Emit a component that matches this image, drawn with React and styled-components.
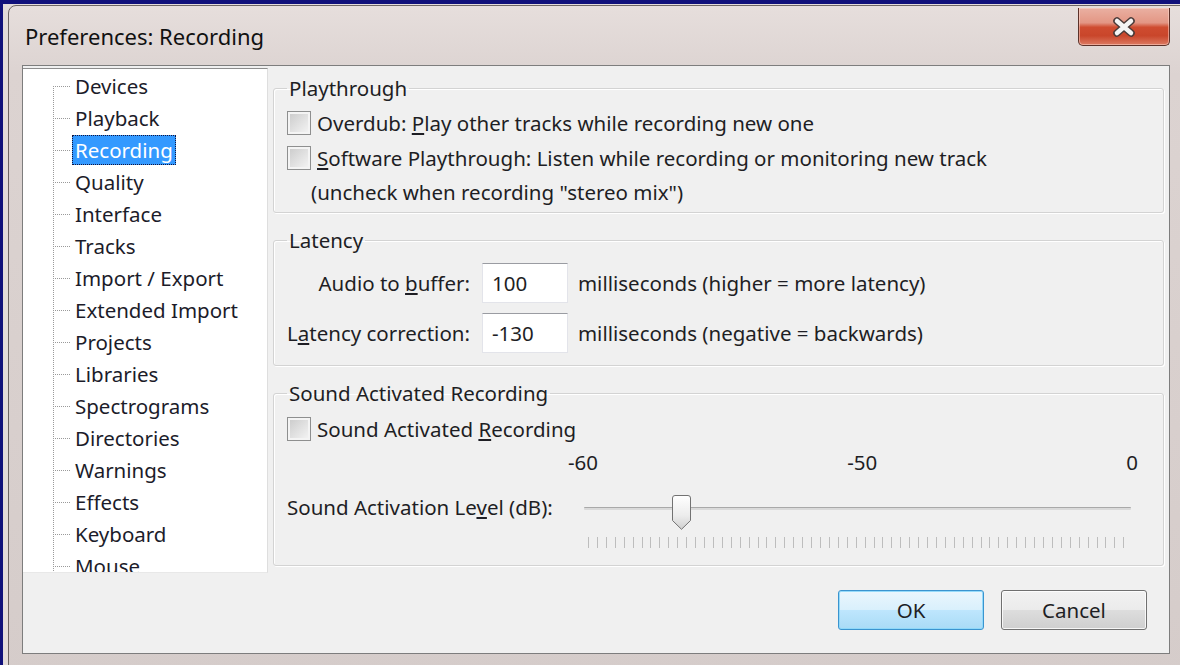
import React from 'react'
import styled, { createGlobalStyle } from 'styled-components'

const GlobalStyle = createGlobalStyle`
  html, body {
    margin: 0;
    padding: 0;
    background: #e3dbd9;
  }
  body {
    font-family: "Noto Sans", "Open Sans", sans-serif;
    color: #1e1e24;
  }
`

const Screen = styled.div`
  width: 1180px;
  height: 665px;
  box-sizing: border-box;
  overflow: hidden;
  border-top: 4px solid #10107a;
  border-left: 3px solid #10107a;
  background: #e3dbd9;
  padding: 1px 0 0 5px;
`

const Window = styled.div`
  width: 1200px;
  height: 690px;
  box-sizing: border-box;
  border: 1px solid #6d6564;
  border-radius: 8px 8px 0 0;
  background: linear-gradient(180deg, #e6dedc 0%, #dcd3d1 10%, #d5ccca 100%);
  padding-left: 13px;
  display: flex;
  flex-direction: column;
`

const TitleBar = styled.div`
  width: 1148px;
  height: 59px;
  display: flex;
  justify-content: space-between;
  align-items: flex-start;
`

const Title = styled.div`
  margin-top: 15px;
  padding-left: 3px;
  font-size: 22px;
  line-height: 30px;
  color: #111;
`

const CloseButton = styled.div`
  margin-top: 2px;
  width: 92px;
  height: 38px;
  box-sizing: border-box;
  border: 1px solid #5c3129;
  border-top: none;
  border-radius: 0 0 5px 5px;
  background: linear-gradient(180deg, #eab0a2 0%, #e39684 40%, #cf4c30 52%, #c9462b 75%, #dc7a62 100%);
  box-shadow: inset 0 0 0 1px rgba(255, 220, 210, 0.5);
  display: flex;
  align-items: center;
  justify-content: center;
`

const Client = styled.div`
  width: 1148px;
  height: 589px;
  box-sizing: border-box;
  border: 1px solid #7d7d7d;
  background: #f0f0f0;
  display: flex;
  flex-direction: column;
`

const MainRow = styled.div`
  display: flex;
  margin-top: 2px;
  height: 507px;
`

const Tree = styled.ul`
  list-style: none;
  margin: 0;
  padding: 1px 0 0;
  width: 245px;
  height: 505px;
  box-sizing: border-box;
  overflow: hidden;
  background: #fff;
  border-top: 1px solid #8d8d8d;
  border-right: 1px solid #dedede;
  border-bottom: 1px solid #e8e8e8;
`

const TreeRow = styled.li`
  display: flex;
  align-items: center;
  height: 32px;
  padding-left: 30px;
  font-size: 20.5px;
`

const Connector = styled.span`
  align-self: stretch;
  width: 18px;
  flex-shrink: 0;
  background-image:
    repeating-linear-gradient(to bottom, #9a9a9a 0 1px, transparent 1px 2px),
    repeating-linear-gradient(to right, #9a9a9a 0 1px, transparent 1px 2px);
  background-size: 1px ${p => (p.$first ? '50%' : '100%')}, 100% 1px;
  background-position: left bottom, left center;
  background-repeat: no-repeat;
`

const TreeLabel = styled.span`
  margin-left: 1px;
  padding: 0 3px;
  height: 30px;
  line-height: 30px;
  white-space: nowrap;
  color: ${p => (p.$selected ? '#fff' : '#1c1c2a')};
  background: ${p => (p.$selected ? '#3399ff' : 'transparent')};
  outline: ${p => (p.$selected ? '1px dotted #14143c' : 'none')};
  outline-offset: -1px;
`

const Panel = styled.div`
  flex: 1;
  margin: 0 5px 0 5px;
  padding-top: 8px;
  display: flex;
  flex-direction: column;
  gap: 15px;
`

const Group = styled.fieldset`
  margin: 0;
  padding: 0 13px;
  min-inline-size: 0;
  border: 1px solid #d3d3d3;
  border-radius: 3px;
  box-shadow: inset 1px 1px 0 #fff, 1px 1px 0 #fff;
  font-size: 20.5px;
`

const Legend = styled.legend`
  padding: 0 2px;
  line-height: 24px;
  color: #1e1e24;
`

const CheckList = styled.div`
  padding: 5px 0 2px;
`

const CheckRow = styled.div`
  display: flex;
  align-items: center;
  gap: 6px;
  height: 35px;
  white-space: nowrap;
`

const Note = styled.div`
  height: 35px;
  line-height: 35px;
  padding-left: 24px;
  white-space: nowrap;
`

const Box = styled.span`
  width: 24px;
  height: 24px;
  box-sizing: border-box;
  flex-shrink: 0;
  border: 1px solid #8e8f8f;
  background: linear-gradient(135deg, #c9c9c9 0%, #e2e2e2 55%, #f6f6f6 100%);
  box-shadow: inset 0 0 0 2px #f4f4f4;
`

const LatencyGrid = styled.div`
  display: grid;
  grid-template-columns: auto 86px auto;
  justify-content: start;
  column-gap: 12px;
  row-gap: 10px;
  align-items: center;
  padding: 11px 0 12px;
  white-space: nowrap;
`

const FieldLabel = styled.label`
  justify-self: end;
`

const Hint = styled.span`
  margin-left: -2px;
`

const NumberField = styled.input`
  width: 86px;
  height: 40px;
  box-sizing: border-box;
  margin: 0;
  padding: 0 9px;
  border: 1px solid #e3e4ea;
  border-top-color: #9a9ca2;
  background: #fff;
  font: inherit;
  color: #1e1e24;
  outline: none;
`

const SoundGrid = styled.div`
  display: grid;
  grid-template-columns: 279px 574px;
  padding: 6px 0 17px;
  white-space: nowrap;
`

const WideRow = styled.div`
  grid-column: 1 / -1;
`

const Scale = styled.div`
  grid-column: 2;
  margin-top: 4px;
  height: 24px;
  line-height: 24px;
  padding: 0 2px;
  display: flex;
  justify-content: space-between;
`

const LevelLabel = styled.label`
  margin-top: 21px;
  line-height: 24px;
`

const Slider = styled.div`
  margin-top: 21px;
  display: flex;
  flex-direction: column;
`

const Track = styled.div`
  position: relative;
  height: 35px;
  margin: 0 9px 0 18px;
`

const Channel = styled.div`
  margin-top: 12px;
  height: 3px;
  box-sizing: border-box;
  border-top: 1px solid #a9a9a9;
  background: #dadada;
  border-radius: 1px;
`

const Thumb = styled.svg`
  position: absolute;
  top: 0;
`

const Ticks = styled.div`
  margin: 7px 15px 0 22px;
  height: 11px;
  display: flex;
  justify-content: space-between;
`

const Tick = styled.span`
  width: 1px;
  height: 100%;
  background: #bdbdbd;
`

const Footer = styled.div`
  display: flex;
  justify-content: flex-end;
  gap: 17px;
  padding: 15px 22px 23px 0;
`

const Button = styled.button`
  width: 146px;
  height: 40px;
  margin: 0;
  padding: 0;
  font: inherit;
  font-size: 20.5px;
  color: #1e1e24;
  border-radius: 3px;
  border: 1px solid ${p => (p.$primary ? '#3a94cf' : '#707070')};
  background: ${p =>
    p.$primary
      ? 'linear-gradient(180deg, #eaf6fd 0%, #d9f0fc 50%, #bee6fd 51%, #a9dbf6 100%)'
      : 'linear-gradient(180deg, #f2f2f2 0%, #ebebeb 50%, #dddddd 51%, #cfcfcf 100%)'};
  box-shadow: inset 0 0 0 1px ${p => (p.$primary ? 'rgba(140, 215, 250, 0.9)' : 'rgba(255, 255, 255, 0.8)')};
`

const sections = [
  'Devices', 'Playback', 'Recording', 'Quality', 'Interface', 'Tracks',
  'Import / Export', 'Extended Import', 'Projects', 'Libraries',
  'Spectrograms', 'Directories', 'Warnings', 'Effects', 'Keyboard', 'Mouse',
]

const CloseGlyph = () => (
  <svg width="26" height="20" viewBox="0 0 26 20">
    <path d="M6 4 L20 16 M20 4 L6 16" stroke="#4a3a38" strokeWidth="7.5" strokeLinecap="round" />
    <path d="M6 4 L20 16 M20 4 L6 16" stroke="#f4f4f4" strokeWidth="4.5" strokeLinecap="round" />
  </svg>
)

const SliderThumb = ({ left }) => (
  <Thumb width="19" height="35" viewBox="0 0 19 35" style={{ left }}>
    <defs>
      <linearGradient id="thumbFill" x1="0" y1="0" x2="0" y2="1">
        <stop offset="0" stopColor="#ffffff" />
        <stop offset="0.6" stopColor="#ececec" />
        <stop offset="1" stopColor="#cfcfcf" />
      </linearGradient>
    </defs>
    <path
      d="M3 0.5 H16 Q18.5 0.5 18.5 3 V25.5 L9.5 34.3 L0.5 25.5 V3 Q0.5 0.5 3 0.5 Z"
      fill="url(#thumbFill)"
      stroke="#727272"
    />
  </Thumb>
)

const LevelSlider = ({ min, max, value }) => {
  const trackWidth = 547
  const thumbWidth = 19
  const left = ((value - min) / (max - min)) * (trackWidth - thumbWidth)
  const ticks = Array.from({ length: max - min + 1 }, (_, i) => i)

  return (
    <Slider>
      <Track>
        <Channel />
        <SliderThumb left={left} />
      </Track>
      <Ticks>
        {ticks.map(i => <Tick key={i} />)}
      </Ticks>
    </Slider>
  )
}

export default function App() {
  return (
    <>
      <GlobalStyle />
      <Screen>
        <Window>
          <TitleBar>
            <Title>Preferences: Recording</Title>
            <CloseButton>
              <CloseGlyph />
            </CloseButton>
          </TitleBar>

          <Client>
            <MainRow>
              <Tree>
                {sections.map((name, i) => (
                  <TreeRow key={name}>
                    <Connector $first={i === 0} />
                    <TreeLabel $selected={name === 'Recording'}>{name}</TreeLabel>
                  </TreeRow>
                ))}
              </Tree>

              <Panel>
                <Group>
                  <Legend>Playthrough</Legend>
                  <CheckList>
                    <CheckRow>
                      <Box />
                      <span>Overdub: <u>P</u>lay other tracks while recording new one</span>
                    </CheckRow>
                    <CheckRow>
                      <Box />
                      <span><u>S</u>oftware Playthrough: Listen while recording or monitoring new track</span>
                    </CheckRow>
                    <Note>(uncheck when recording "stereo mix")</Note>
                  </CheckList>
                </Group>

                <Group>
                  <Legend>Latency</Legend>
                  <LatencyGrid>
                    <FieldLabel>Audio to <u>b</u>uffer:</FieldLabel>
                    <NumberField readOnly defaultValue="100" />
                    <Hint>milliseconds (higher = more latency)</Hint>
                    <FieldLabel>L<u>a</u>tency correction:</FieldLabel>
                    <NumberField readOnly defaultValue="-130" />
                    <Hint>milliseconds (negative = backwards)</Hint>
                  </LatencyGrid>
                </Group>

                <Group>
                  <Legend>Sound Activated Recording</Legend>
                  <SoundGrid>
                    <WideRow>
                      <CheckRow>
                        <Box />
                        <span>Sound Activated <u>R</u>ecording</span>
                      </CheckRow>
                    </WideRow>
                    <Scale>
                      <span>-60</span>
                      <span>-50</span>
                      <span>0</span>
                    </Scale>
                    <LevelLabel>Sound Activation Le<u>v</u>el (dB):</LevelLabel>
                    <LevelSlider min={-60} max={0} value={-50} />
                  </SoundGrid>
                </Group>
              </Panel>
            </MainRow>

            <Footer>
              <Button $primary>OK</Button>
              <Button>Cancel</Button>
            </Footer>
          </Client>
        </Window>
      </Screen>
    </>
  )
}
